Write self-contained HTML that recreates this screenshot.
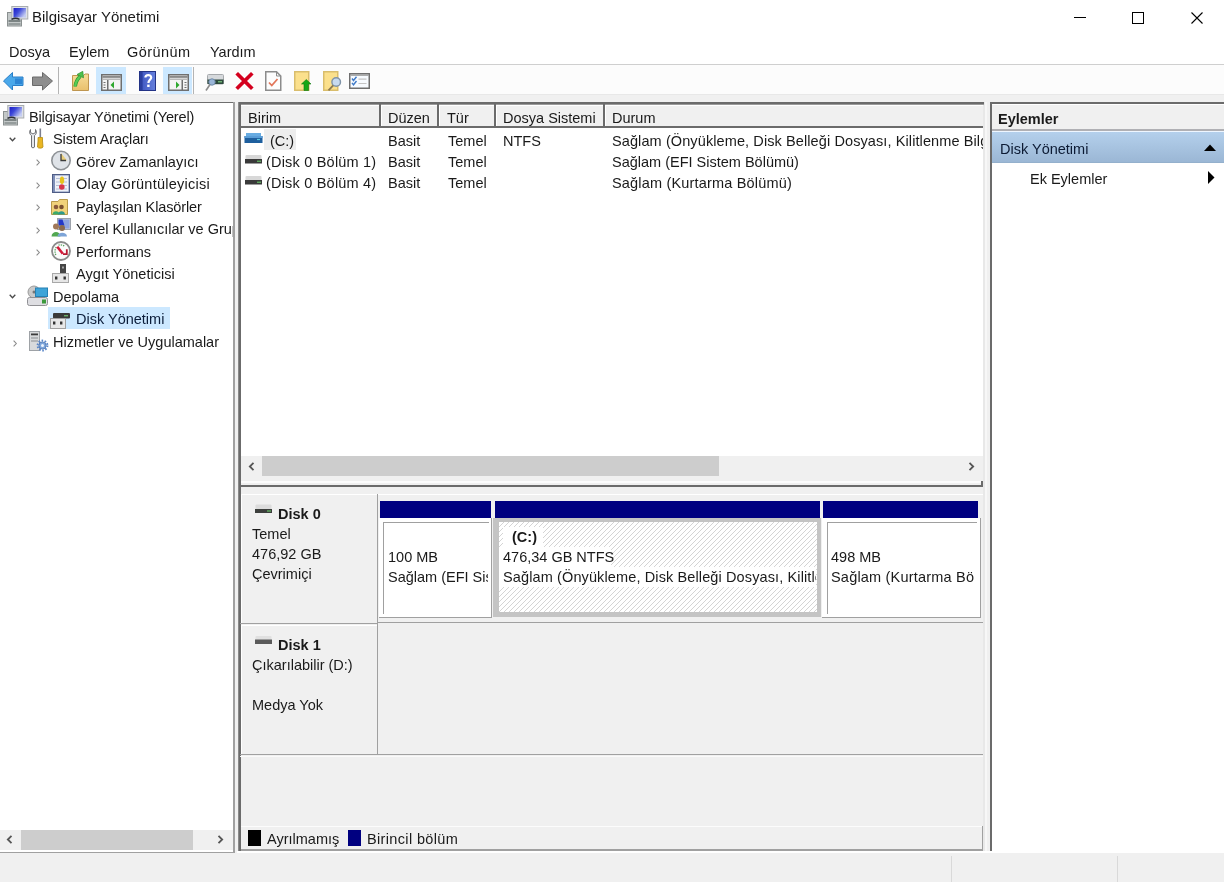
<!DOCTYPE html>
<html><head><meta charset="utf-8">
<style>
*{margin:0;padding:0;box-sizing:border-box}
html,body{width:1224px;height:882px;overflow:hidden;background:#f0f0f0}
body{-webkit-font-smoothing:antialiased;position:relative;font-family:"Liberation Sans",sans-serif;font-size:14.5px;color:#1a1a1a;line-height:18px}
.a{position:absolute}
.t{position:absolute;white-space:nowrap;line-height:18px;will-change:transform}
.b{font-weight:bold}
svg{position:absolute;overflow:visible}
</style></head><body>

<!-- title bar -->
<div class="a" style="left:0;top:0;width:1224px;height:65px;background:#fff"></div>
<div class="t" style="left:32px;top:8px;font-size:15px">Bilgisayar Yönetimi</div>
<div class="a" style="left:1074px;top:17px;width:12px;height:1px;background:#000"></div>
<div class="a" style="left:1132px;top:12px;width:12px;height:12px;border:1px solid #000"></div>
<svg style="left:1191px;top:12px" width="12" height="12"><path d="M0.5 0.5L11.5 11.5M11.5 0.5L0.5 11.5" stroke="#000" stroke-width="1.1"/></svg>

<!-- menu -->
<div class="t" style="left:9px;top:43px">Dosya</div>
<div class="t" style="left:69px;top:43px">Eylem</div>
<div class="t" style="left:127px;top:43px;letter-spacing:0.45px">Görünüm</div>
<div class="t" style="left:210px;top:43px">Yardım</div>
<div class="a" style="left:0;top:64px;width:1224px;height:1px;background:#cfcfcf"></div>

<!-- toolbar -->
<div class="a" style="left:0;top:65px;width:1224px;height:29px;background:#fcfcfc"></div>
<div class="a" style="left:0;top:94px;width:1224px;height:1px;background:#e8e8e8"></div>
<div class="a" style="left:58px;top:67px;width:1px;height:27px;background:#b4b4b4"></div>
<div class="a" style="left:96px;top:67px;width:30px;height:27px;background:#cce8ff"></div>
<div class="a" style="left:163px;top:67px;width:29px;height:27px;background:#cce8ff"></div>
<div class="a" style="left:193px;top:67px;width:1px;height:27px;background:#b4b4b4"></div>

<!-- tree panel -->
<div class="a" style="left:0;top:102px;width:233px;height:749px;background:#fff"></div>
<div class="a" style="left:0;top:102px;width:233px;height:1px;background:#6e6e6e"></div>
<div class="a" style="left:233px;top:102px;width:2px;height:751px;background:#a0a0a0"></div>
<div class="a" style="left:0;top:852px;width:235px;height:1px;background:#a0a0a0"></div>
<div class="a" style="left:0;top:851px;width:233px;height:1px;background:#fff"></div>
<div class="a" style="left:48px;top:307px;width:122px;height:22px;background:#cce8ff"></div>
<div class="t" style="left:29px;top:108px;letter-spacing:-0.15px">Bilgisayar Yönetimi (Yerel)</div>
<div class="t" style="left:53px;top:130px;letter-spacing:-0.12px">Sistem Araçları</div>
<div class="t" style="left:76px;top:153px">Görev Zamanlayıcı</div>
<div class="t" style="left:76px;top:175px;letter-spacing:0.25px">Olay Görüntüleyicisi</div>
<div class="t" style="left:76px;top:198px;letter-spacing:-0.12px">Paylaşılan Klasörler</div>
<div class="a" style="left:0;top:0;width:233px;height:882px;overflow:hidden">
<div class="t" style="left:76px;top:220px">Yerel Kullanıcılar ve Gruplar</div>
</div>
<div class="t" style="left:76px;top:243px">Performans</div>
<div class="t" style="left:76px;top:265px">Aygıt Yöneticisi</div>
<div class="t" style="left:53px;top:288px">Depolama</div>
<div class="t" style="left:76px;top:310px;color:#0b1d3a">Disk Yönetimi</div>
<div class="t" style="left:53px;top:333px">Hizmetler ve Uygulamalar</div>
<!-- tree scrollbar -->
<div class="a" style="left:0;top:830px;width:233px;height:20px;background:#f0f0f0"></div>
<div class="a" style="left:21px;top:830px;width:172px;height:20px;background:#cdcdcd"></div>
<svg style="left:6px;top:835px" width="7" height="9"><path d="M5.5 0.8L1.8 4.5L5.5 8.2" fill="none" stroke="#555" stroke-width="1.8"/></svg>
<svg style="left:217px;top:835px" width="7" height="9"><path d="M1.5 0.8L5.2 4.5L1.5 8.2" fill="none" stroke="#555" stroke-width="1.8"/></svg>

<!-- center panel -->
<div class="a" style="left:238px;top:102px;width:745px;height:750px;background:#fff"></div>
<div class="a" style="left:983px;top:102px;width:2px;height:750px;background:#e8e8e8"></div>
<div class="a" style="left:985px;top:102px;width:2px;height:750px;background:#f7f7f7"></div>
<div class="a" style="left:238px;top:102px;width:746px;height:2px;background:#6b6b6b"></div>
<div class="a" style="left:240px;top:104px;width:744px;height:1px;background:#9a9a9a"></div>
<div class="a" style="left:238px;top:102px;width:1px;height:750px;background:#8a8a8a"></div>
<div class="a" style="left:239px;top:102px;width:2px;height:750px;background:#6b6b6b"></div>
<!-- list header -->
<div class="a" style="left:241px;top:105px;width:742px;height:1px;background:#fff"></div>
<div class="a" style="left:241px;top:106px;width:742px;height:20px;background:#f0f0f0"></div>
<div class="a" style="left:241px;top:126px;width:742px;height:2px;background:#6b6b6b"></div>
<div class="a" style="left:379px;top:104px;width:2px;height:22px;background:#6b6b6b"></div>
<div class="a" style="left:381px;top:105px;width:1px;height:21px;background:#fff"></div>
<div class="a" style="left:437px;top:104px;width:2px;height:22px;background:#6b6b6b"></div>
<div class="a" style="left:439px;top:105px;width:1px;height:21px;background:#fff"></div>
<div class="a" style="left:494px;top:104px;width:2px;height:22px;background:#6b6b6b"></div>
<div class="a" style="left:496px;top:105px;width:1px;height:21px;background:#fff"></div>
<div class="a" style="left:603px;top:104px;width:2px;height:22px;background:#6b6b6b"></div>
<div class="a" style="left:605px;top:105px;width:1px;height:21px;background:#fff"></div>
<div class="t" style="left:248px;top:109px">Birim</div>
<div class="t" style="left:388px;top:109px">Düzen</div>
<div class="t" style="left:447px;top:109px">Tür</div>
<div class="t" style="left:503px;top:109px">Dosya Sistemi</div>
<div class="t" style="left:612px;top:109px">Durum</div>
<!-- list rows -->
<div class="a" style="left:264px;top:129px;width:32px;height:21px;background:#ededed"></div>
<div class="t" style="left:270px;top:132px">(C:)</div>
<div class="t" style="left:266px;top:153px;letter-spacing:0.2px">(Disk 0 Bölüm 1)</div>
<div class="t" style="left:266px;top:174px;letter-spacing:0.2px">(Disk 0 Bölüm 4)</div>
<div class="t" style="left:388px;top:132px">Basit</div>
<div class="t" style="left:388px;top:153px">Basit</div>
<div class="t" style="left:388px;top:174px">Basit</div>
<div class="t" style="left:448px;top:132px">Temel</div>
<div class="t" style="left:448px;top:153px">Temel</div>
<div class="t" style="left:448px;top:174px">Temel</div>
<div class="t" style="left:503px;top:132px">NTFS</div>
<div class="a" style="left:600px;top:128px;width:383px;height:70px;overflow:hidden">
<div class="t" style="left:12px;top:4px;letter-spacing:0.1px">Sağlam (Önyükleme, Disk Belleği Dosyası, Kilitlenme Bilgi Dökümü, Birincil Bölüm)</div>
<div class="t" style="left:12px;top:25px">Sağlam (EFI Sistem Bölümü)</div>
<div class="t" style="left:12px;top:46px;letter-spacing:0.18px">Sağlam (Kurtarma Bölümü)</div>
</div>
<!-- list h scrollbar -->
<div class="a" style="left:241px;top:456px;width:742px;height:24px;background:#f0f0f0"></div>
<div class="a" style="left:262px;top:456px;width:457px;height:20px;background:#cdcdcd"></div>
<svg style="left:248px;top:462px" width="7" height="9"><path d="M5.5 0.8L1.8 4.5L5.5 8.2" fill="none" stroke="#555" stroke-width="1.8"/></svg>
<svg style="left:968px;top:462px" width="7" height="9"><path d="M1.5 0.8L5.2 4.5L1.5 8.2" fill="none" stroke="#555" stroke-width="1.8"/></svg>
<!-- splitter -->
<div class="a" style="left:241px;top:480px;width:742px;height:7px;background:#f0f0f0"></div>
<div class="a" style="left:241px;top:481px;width:741px;height:2px;background:#fcfcfc"></div>
<div class="a" style="left:239px;top:485px;width:744px;height:2px;background:#6b6b6b"></div>
<div class="a" style="left:981px;top:481px;width:2px;height:5px;background:#6b6b6b"></div>
<!-- graphical -->
<div class="a" style="left:241px;top:487px;width:742px;height:364px;background:#f0f0f0"></div>

<!-- GRAPHICAL VIEW -->
<!-- disk0 label -->
<div class="a" style="left:241px;top:494px;width:136px;height:129px;border-top:1px solid #fff;border-left:1px solid #fff"></div>
<div class="a" style="left:377px;top:494px;width:1px;height:130px;background:#a0a0a0"></div>
<div class="a" style="left:240px;top:623px;width:138px;height:1px;background:#a0a0a0"></div>
<svg style="left:255px;top:504px" width="17" height="10" viewBox="0 0 17 10">
 <rect x="0.5" y="0.5" width="16" height="5" rx="1" fill="#dcdcdc"/>
 <rect x="0" y="5" width="17" height="4" fill="#3c3f3c"/>
 <path d="M12 7h4" stroke="#6fd86f" stroke-width="1"/>
</svg>
<div class="t b" style="left:278px;top:505px">Disk 0</div>
<div class="t" style="left:252px;top:525px">Temel</div>
<div class="t" style="left:252px;top:545px">476,92 GB</div>
<div class="t" style="left:252px;top:565px">Çevrimiçi</div>
<!-- partitions area -->
<div class="a" style="left:378px;top:494px;width:605px;height:1px;background:#fff"></div>
<div class="a" style="left:378px;top:622px;width:605px;height:1px;background:#a0a0a0"></div>
<!-- part1 -->
<div class="a" style="left:380px;top:501px;width:111px;height:17px;background:#000080"></div>
<div class="a" style="left:379px;top:518px;width:113px;height:100px;background:#fff;border-right:1px solid #a0a0a0;border-bottom:1px solid #a0a0a0"></div>
<div class="a" style="left:383px;top:522px;width:106px;height:92px;background:#fff;border-left:1px solid #a0a0a0;border-top:1px solid #a0a0a0"></div>
<div class="a" style="left:384px;top:540px;width:104px;height:50px;overflow:hidden">
<div class="t" style="left:4px;top:8px">100 MB</div>
<div class="t" style="left:4px;top:28px">Sağlam (EFI Sistem Bölümü)</div>
</div>
<!-- part2 C: -->
<div class="a" style="left:495px;top:501px;width:325px;height:17px;background:#000080"></div>
<div class="a" style="left:493px;top:518px;width:328px;height:99px;background:#c4c4c4"></div>
<svg style="left:499px;top:522px" width="318" height="90"><defs><pattern id="hatch" patternUnits="userSpaceOnUse" width="5" height="5"><rect width="5" height="5" fill="#fff"/><path d="M0 5L5 0M-1 1L1 -1M4 6L6 4" stroke="#cfcfcf" stroke-width="0.9"/></pattern></defs><rect width="318" height="90" fill="url(#hatch)"/></svg>
<div class="a" style="left:499px;top:527px;width:317px;height:62px;overflow:hidden">
<div class="a" style="left:4px;top:0px;width:40px;height:20px;background:#fff"></div>
<div class="a" style="left:0px;top:20px;width:112px;height:20px;background:#fff"></div>
<div class="a" style="left:0px;top:40px;width:317px;height:20px;background:#fff"></div>
<div class="t b" style="left:13px;top:1px">(C:)</div>
<div class="t" style="left:4px;top:21px">476,34 GB NTFS</div>
<div class="t" style="left:4px;top:41px;letter-spacing:0.12px">Sağlam (Önyükleme, Disk Belleği Dosyası, Kilitlenme</div>
</div>
<!-- part3 -->
<div class="a" style="left:823px;top:501px;width:155px;height:17px;background:#000080"></div>
<div class="a" style="left:822px;top:518px;width:159px;height:100px;background:#fff;border-right:1px solid #a0a0a0;border-bottom:1px solid #a0a0a0"></div>
<div class="a" style="left:827px;top:522px;width:150px;height:92px;background:#fff;border-left:1px solid #a0a0a0;border-top:1px solid #a0a0a0"></div>
<div class="a" style="left:828px;top:540px;width:146px;height:50px;overflow:hidden">
<div class="t" style="left:3px;top:8px">498 MB</div>
<div class="t" style="left:3px;top:28px;letter-spacing:0.2px">Sağlam (Kurtarma Bölümü)</div>
</div>
<!-- disk1 -->
<div class="a" style="left:241px;top:625px;width:136px;height:129px;border-top:1px solid #fff;border-left:1px solid #fff"></div>
<div class="a" style="left:377px;top:624px;width:1px;height:131px;background:#a0a0a0"></div>
<div class="a" style="left:240px;top:754px;width:743px;height:1px;background:#a0a0a0"></div>
<div class="a" style="left:240px;top:756px;width:743px;height:1px;background:#fafafa"></div>
<svg style="left:255px;top:636px" width="17" height="9" viewBox="0 0 17 9">
 <rect x="0.5" y="0" width="16" height="4" rx="1" fill="#e0e0e0"/>
 <rect x="0" y="3.5" width="17" height="4.5" fill="#5a5a5a"/>
</svg>
<div class="t b" style="left:278px;top:636px">Disk 1</div>
<div class="t" style="left:252px;top:656px">Çıkarılabilir (D:)</div>
<div class="t" style="left:252px;top:696px">Medya Yok</div>
<!-- legend -->
<div class="a" style="left:241px;top:826px;width:741px;height:1px;background:#fcfcfc"></div>
<div class="a" style="left:982px;top:826px;width:1px;height:25px;background:#a0a0a0"></div>
<div class="a" style="left:241px;top:849px;width:742px;height:2px;background:#a0a0a0"></div>
<div class="a" style="left:248px;top:830px;width:13px;height:16px;background:#000"></div>
<div class="t" style="left:267px;top:830px">Ayrılmamış</div>
<div class="a" style="left:348px;top:830px;width:13px;height:16px;background:#000080"></div>
<div class="t" style="left:367px;top:830px;letter-spacing:0.35px">Birincil bölüm</div>

<!-- actions pane -->
<div class="a" style="left:990px;top:102px;width:234px;height:750px;background:#fff;border-top:2px solid #6b6b6b;border-left:2px solid #6b6b6b"></div>
<div class="a" style="left:992px;top:104px;width:232px;height:27px;background:#f0f0f0;border-top:1px solid #fff"></div>
<div class="a" style="left:992px;top:129px;width:232px;height:2px;background:#b0b0b4"></div>
<div class="a" style="left:992px;top:131px;width:232px;height:1px;background:#eef6ff"></div>
<div class="t b" style="left:998px;top:110px">Eylemler</div>
<div class="a" style="left:992px;top:132px;width:232px;height:31px;background:linear-gradient(#b4d0ec,#9ab6d4)"></div>
<div class="a" style="left:992px;top:162px;width:232px;height:1px;background:#94b0cc"></div>
<div class="t" style="left:1000px;top:140px;color:#0c1a33">Disk Yönetimi</div>
<svg style="left:1204px;top:144px" width="12" height="7"><path d="M0 7L6 0.5L12 7Z" fill="#000"/></svg>
<div class="t" style="left:1030px;top:170px">Ek Eylemler</div>
<svg style="left:1208px;top:171px" width="7" height="13"><path d="M0 0L6.5 6.5L0 13Z" fill="#000"/></svg>

<!-- status bar -->
<div class="a" style="left:237px;top:851px;width:987px;height:2px;background:#fff"></div>
<div class="a" style="left:951px;top:856px;width:1px;height:26px;background:#d9d9d9"></div>
<div class="a" style="left:1117px;top:856px;width:1px;height:26px;background:#d9d9d9"></div>


<!-- ICONS -->
<svg style="left:7px;top:6px" width="21" height="21" viewBox="0 0 21 21">
 <defs><linearGradient id="scr1" x1="0" y1="0" x2="1" y2="0.6"><stop offset="0" stop-color="#1c1cc8"/><stop offset="0.45" stop-color="#3c48d8"/><stop offset="1" stop-color="#c4ccf2"/></linearGradient></defs>
 <rect x="0.5" y="6.5" width="14" height="13.5" fill="#c3c8c8" stroke="#8a9090"/>
 <rect x="1.5" y="14" width="12" height="2" fill="#7c8484"/>
 <rect x="1.5" y="17" width="12" height="2" fill="#959c9c"/>
 <rect x="4.8" y="0.5" width="16" height="12.5" fill="#dfe2e6" stroke="#a8acb0"/>
 <rect x="6.5" y="2" width="12.5" height="9.5" fill="url(#scr1)"/>
 <path d="M4.5 13.3q4 -2.2 8 0" stroke="#2c2f34" stroke-width="1.4" fill="none"/>
</svg>
<!-- toolbar icons -->
<svg style="left:3px;top:72px" width="21" height="19" viewBox="0 0 21 19">
 <path d="M0.5 9L9.5 0.5V5H20V13.5H9.5V18Z" fill="#4aa8ea" stroke="#2a7fc8" stroke-width="1"/>
 <path d="M12 6.5H19V12H12z" fill="#1d6fc4" opacity="0.6"/>
</svg>
<svg style="left:32px;top:72px" width="21" height="19" viewBox="0 0 21 19">
 <path d="M20.5 9L10.5 0.5V5H0.5V13.5H10.5V18Z" fill="#8e8e8e" stroke="#6a6a6a" stroke-width="1"/>
</svg>
<svg style="left:72px;top:71px" width="18" height="20" viewBox="0 0 18 20">
 <defs><linearGradient id="fld" x1="0" y1="0" x2="0" y2="1"><stop offset="0" stop-color="#f6dc98"/><stop offset="1" stop-color="#e9c06c"/></linearGradient></defs>
 <path d="M0.5 4.5H11.5L13 3H16.5V19.5H0.5Z" fill="url(#fld)" stroke="#bf9650"/>
 <path d="M3.2 15.5C3.5 11 5.5 8 8.2 5.2" fill="none" stroke="#2f9a2f" stroke-width="3.6"/>
 <path d="M3.2 15.5C3.5 11 5.5 8 8.2 5.2" fill="none" stroke="#56cc56" stroke-width="2.2"/>
 <path d="M5 3.5L10.8 0.3L11.5 6.8Z" fill="#4cc24c" stroke="#2f8f2f" stroke-width="0.7"/>
</svg>
<svg style="left:101px;top:74px" width="21" height="17" viewBox="0 0 21 17">
 <rect x="0.75" y="0.75" width="19.5" height="15.5" fill="#f4f4f4" stroke="#6f6f6f" stroke-width="1.5"/>
 <rect x="1.5" y="2.2" width="18" height="1.5" fill="#6f6f6f"/>
 <rect x="1.5" y="4.5" width="18" height="1.5" fill="#b8b8b8"/>
 <rect x="6" y="6" width="1.5" height="10" fill="#6f6f6f"/>
 <path d="M2.5 8.5h2M2.5 11h2M2.5 13.5h2" stroke="#6f6f6f" stroke-width="1"/>
 <path d="M9.5 11L13 7.5V14.5Z" fill="#2fa82f"/>
</svg>
<svg style="left:139px;top:71px" width="17" height="20" viewBox="0 0 17 20">
 <defs><linearGradient id="hlp" x1="0" y1="0" x2="1" y2="0"><stop offset="0" stop-color="#3c54c0"/><stop offset="1" stop-color="#6680dc"/></linearGradient></defs>
 <rect x="0.5" y="0.5" width="16" height="19" fill="url(#hlp)" stroke="#233386"/>
 <rect x="1" y="1" width="2.6" height="18" fill="#2a3e9e"/>
 <path d="M6.4 6.4C6.4 3.4 12.2 3.2 12.2 6.4C12.2 8.8 9.4 9 9.4 12" fill="none" stroke="#fff" stroke-width="2.2"/>
 <rect x="8.2" y="13.6" width="2.4" height="2.4" fill="#fff"/>
</svg>
<svg style="left:168px;top:74px" width="21" height="17" viewBox="0 0 21 17">
 <rect x="0.75" y="0.75" width="19.5" height="15.5" fill="#f4f4f4" stroke="#6f6f6f" stroke-width="1.5"/>
 <rect x="1.5" y="2.2" width="18" height="1.5" fill="#6f6f6f"/>
 <rect x="1.5" y="4.5" width="18" height="1.5" fill="#b8b8b8"/>
 <rect x="13.5" y="6" width="1.5" height="10" fill="#6f6f6f"/>
 <path d="M16.5 8.5h2M16.5 11h2M16.5 13.5h2" stroke="#6f6f6f" stroke-width="1"/>
 <path d="M11.5 11L8 7.5V14.5Z" fill="#2fa82f"/>
</svg>
<svg style="left:205px;top:74px" width="20" height="18" viewBox="0 0 20 18">
 <rect x="2.5" y="0.5" width="16" height="9.5" rx="1" fill="#d6d9dc" stroke="#a6a9ac"/>
 <rect x="2.5" y="5.5" width="16" height="4.5" fill="#2d4a3c"/>
 <path d="M13 7.8h4" stroke="#8fe08f" stroke-width="1"/>
 <circle cx="7" cy="8" r="3.2" fill="#9ab6d8" stroke="#6f8aa8"/>
 <path d="M5 10.5L1 16.5" stroke="#8a8a8a" stroke-width="1.6"/>
</svg>
<svg style="left:235px;top:72px" width="19" height="18" viewBox="0 0 19 18">
 <path d="M3 2.5L16 15.5M16 2.5L3 15.5" stroke="#d4001e" stroke-width="3.7" stroke-linecap="square"/>
</svg>
<svg style="left:265px;top:71px" width="17" height="20" viewBox="0 0 17 20">
 <path d="M0.75 0.75H11.5L15.75 5V19.25H0.75Z" fill="#fdfdfd" stroke="#8c8c8c" stroke-width="1.5"/>
 <path d="M11.5 0.75V5H15.75" fill="none" stroke="#8c8c8c" stroke-width="1"/>
 <path d="M4 11.5L6.8 14.5L12.5 8" fill="none" stroke="#e2765a" stroke-width="1.8"/>
</svg>
<svg style="left:294px;top:71px" width="18" height="20" viewBox="0 0 18 20">
 <rect x="0.75" y="0.75" width="14" height="18.5" fill="#fbe08c" stroke="#d9bd6c" stroke-width="1.5"/>
 <path d="M7.5 13L12.3 8.5L17 13H14.5V19.5H10V13Z" fill="#16a716" stroke="#0f7a0f" stroke-width="0.6"/>
</svg>
<svg style="left:323px;top:71px" width="19" height="20" viewBox="0 0 19 20">
 <rect x="0.75" y="0.75" width="14" height="18.5" fill="#fbe08c" stroke="#d9bd6c" stroke-width="1.5"/>
 <circle cx="13.2" cy="11" r="4.3" fill="#c7daf0" stroke="#7f93a8" stroke-width="1.4"/>
 <path d="M10.2 14.3L5.5 19.3" stroke="#8c7a50" stroke-width="1.8"/>
</svg>
<svg style="left:349px;top:73px" width="21" height="16" viewBox="0 0 21 16">
 <rect x="0.75" y="0.75" width="19.5" height="14.5" fill="#f7fbff" stroke="#6f6f6f" stroke-width="1.5"/>
 <rect x="1.5" y="1.5" width="18" height="1.3" fill="#9a9a9a"/>
 <path d="M3 5.5L4.5 7.5L7.5 3.8M3 9.8L4.5 11.8L7.5 8" fill="none" stroke="#3f7ac8" stroke-width="1.4"/>
 <path d="M9.5 6.2h8M9.5 10.5h8" stroke="#c4c4c4" stroke-width="1.2"/>
</svg>
<!-- tree icons -->
<svg style="left:3px;top:105px" width="21" height="21" viewBox="0 0 21 21">
 <defs><linearGradient id="scr2" x1="0" y1="0" x2="1" y2="0.6"><stop offset="0" stop-color="#1c1cc8"/><stop offset="0.45" stop-color="#3c48d8"/><stop offset="1" stop-color="#c4ccf2"/></linearGradient></defs>
 <rect x="0.5" y="6.5" width="14" height="13.5" fill="#c3c8c8" stroke="#8a9090"/>
 <rect x="1.5" y="14" width="12" height="2" fill="#7c8484"/>
 <rect x="1.5" y="17" width="12" height="2" fill="#959c9c"/>
 <rect x="4.8" y="0.5" width="16" height="12.5" fill="#dfe2e6" stroke="#a8acb0"/>
 <rect x="6.5" y="2" width="12.5" height="9.5" fill="url(#scr2)"/>
 <path d="M4.5 13.3q4 -2.2 8 0" stroke="#2c2f34" stroke-width="1.4" fill="none"/>
</svg>
<svg style="left:9px;top:137px" width="7" height="5" viewBox="0 0 7 5"><path d="M0.7 0.7L3.5 3.8L6.3 0.7" fill="none" stroke="#4a4a4a" stroke-width="1.3"/></svg>
<svg style="left:29px;top:128px" width="15" height="21" viewBox="0 0 15 21">
 <path d="M1.5 1.5C0 3.5 0.5 6.5 2.5 7.5V19C2.5 20 5.5 20 5.5 19V7.5C7.5 6.5 8 3.5 6.5 1.5V4.5L4 6L1.5 4.5Z" fill="#e6e8ec" stroke="#6e7074" stroke-width="1"/>
 <rect x="10.5" y="0.5" width="1.6" height="9" fill="#7c8090"/>
 <path d="M9 9.5H13.5V13L14 19C14 20.5 8.5 20.5 8.5 19L9 13Z" fill="#eab622" stroke="#b48a10" stroke-width="0.8"/>
</svg>
<svg style="left:36px;top:159px" width="4" height="7" viewBox="0 0 4 7"><path d="M0.6 0.6L3.3 3.5L0.6 6.4" fill="none" stroke="#8a8a8a" stroke-width="1.1"/></svg>
<svg style="left:36px;top:182px" width="4" height="7" viewBox="0 0 4 7"><path d="M0.6 0.6L3.3 3.5L0.6 6.4" fill="none" stroke="#8a8a8a" stroke-width="1.1"/></svg>
<svg style="left:36px;top:204px" width="4" height="7" viewBox="0 0 4 7"><path d="M0.6 0.6L3.3 3.5L0.6 6.4" fill="none" stroke="#8a8a8a" stroke-width="1.1"/></svg>
<svg style="left:36px;top:227px" width="4" height="7" viewBox="0 0 4 7"><path d="M0.6 0.6L3.3 3.5L0.6 6.4" fill="none" stroke="#8a8a8a" stroke-width="1.1"/></svg>
<svg style="left:36px;top:249px" width="4" height="7" viewBox="0 0 4 7"><path d="M0.6 0.6L3.3 3.5L0.6 6.4" fill="none" stroke="#8a8a8a" stroke-width="1.1"/></svg>
<svg style="left:51px;top:150px" width="20" height="21" viewBox="0 0 20 21">
 <circle cx="10" cy="10.5" r="9.2" fill="#dfe3e8" stroke="#8e9296" stroke-width="1.6"/>
 <path d="M10 3V10.5H16" fill="#e9cf7c"/>
 <path d="M10 4V10.5H15" fill="none" stroke="#3c3c3c" stroke-width="1.3"/>
</svg>
<svg style="left:52px;top:174px" width="18" height="19" viewBox="0 0 18 19">
 <rect x="0.5" y="0.5" width="17" height="18" fill="#7f8fb8" stroke="#4f5d86"/>
 <rect x="3" y="1.5" width="13.5" height="16" fill="#eef1f8"/>
 <path d="M4 4.5h11M4 8h11M4 11.5h11M4 15h11" stroke="#a6b2cc" stroke-width="0.8"/>
 <ellipse cx="10" cy="6.3" rx="2.2" ry="3.8" fill="#e6c21c"/>
 <circle cx="9.8" cy="13" r="2.8" fill="#d8364a"/>
</svg>
<svg style="left:51px;top:198px" width="18" height="18" viewBox="0 0 18 18">
 <path d="M0.5 3.5H7L8.5 1.5H16.5V16.5H0.5Z" fill="#f1d27a" stroke="#b89a4a"/>
 <circle cx="5" cy="9" r="2.3" fill="#8a5a3a"/>
 <circle cx="10.5" cy="9" r="2.3" fill="#7a5030"/>
 <path d="M1.5 16.5C1.5 12 8.5 12 8.5 16.5Z" fill="#3aaa6a"/>
 <path d="M7 16.5C7 12 14 12 14 16.5Z" fill="#2e9a8a"/>
</svg>
<svg style="left:51px;top:218px" width="20" height="19" viewBox="0 0 20 19">
 <rect x="6.5" y="0.5" width="13" height="11" fill="#c6cad2" stroke="#9da2aa"/>
 <rect x="7.5" y="1.5" width="11" height="9" fill="#8ea4e0"/>
 <path d="M7.5 1.5h4l2 6h-6z" fill="#2438c8"/>
 <circle cx="5" cy="8.5" r="3" fill="#a07858"/>
 <circle cx="11" cy="10" r="3" fill="#8a6a50"/>
 <path d="M0.5 18.5C0.5 12.5 9.5 12.5 9.5 18.5Z" fill="#52a852"/>
 <path d="M6.5 18.5C6.5 13.5 16 13.5 16 18.5Z" fill="#7da4d8"/>
</svg>
<svg style="left:51px;top:241px" width="20" height="20" viewBox="0 0 20 20">
 <circle cx="10" cy="10" r="9" fill="#fbfbfb" stroke="#8a8a8a" stroke-width="1.8"/>
 <path d="M4.8 14C3.5 11 3.8 7.5 6 5.2M7.5 4.2C9 3.6 11.5 3.8 13.2 5" fill="none" stroke="#5aa060" stroke-width="1.3" stroke-dasharray="1.3 1"/>
 <path d="M6.3 5.8L11.8 12.8" stroke="#d41a3a" stroke-width="2.6"/>
 <path d="M15.8 8.2V13.2H12" fill="none" stroke="#b81830" stroke-width="1.8"/>
</svg>
<svg style="left:52px;top:264px" width="17" height="19" viewBox="0 0 17 19">
 <rect x="8" y="0" width="6" height="9.5" fill="#454545"/>
 <rect x="10.2" y="2.5" width="1.6" height="2" fill="#bbb"/>
 <rect x="0.5" y="9.5" width="16" height="9" fill="#e6e6e6" stroke="#a8a8a8"/>
 <rect x="3" y="12.5" width="2.4" height="3" fill="#333"/>
 <rect x="11.5" y="12.5" width="2.4" height="3" fill="#333"/>
</svg>
<svg style="left:9px;top:294px" width="7" height="5" viewBox="0 0 7 5"><path d="M0.7 0.7L3.5 3.8L6.3 0.7" fill="none" stroke="#4a4a4a" stroke-width="1.3"/></svg>
<svg style="left:27px;top:285px" width="21" height="21" viewBox="0 0 21 21">
 <circle cx="7" cy="7" r="6" fill="#c9c9c9" stroke="#9a9a9a"/>
 <circle cx="7" cy="7" r="1.5" fill="#777"/>
 <rect x="8.5" y="3" width="12" height="8.5" fill="#3ea4d8" stroke="#2480b4"/>
 <rect x="0.5" y="12.5" width="20" height="8" rx="2" fill="#dedee2" stroke="#909094"/>
 <rect x="15" y="14.5" width="4" height="4" fill="#3c9a3c"/>
</svg>
<svg style="left:50px;top:312px" width="21" height="17" viewBox="0 0 21 17">
 <rect x="3" y="1" width="17" height="5.5" rx="1" fill="#3a3a3a"/>
 <path d="M14 3.8h4" stroke="#7fe07f" stroke-width="1"/>
 <rect x="0.5" y="6.5" width="15" height="10" fill="#e8e8e8" stroke="#a0a0a0"/>
 <rect x="3" y="9.5" width="2.4" height="3" fill="#333"/>
 <rect x="10" y="9.5" width="2.4" height="3" fill="#333"/>
</svg>
<svg style="left:13px;top:340px" width="4" height="7" viewBox="0 0 4 7"><path d="M0.6 0.6L3.3 3.5L0.6 6.4" fill="none" stroke="#8a8a8a" stroke-width="1.1"/></svg>
<svg style="left:29px;top:331px" width="19" height="20" viewBox="0 0 19 20">
 <rect x="0.5" y="0.5" width="10" height="19" fill="#d8dadc" stroke="#9ea2a6"/>
 <rect x="2" y="2.5" width="7" height="1.8" fill="#3c3c3c"/>
 <path d="M2 7h7M2 10h7" stroke="#8a8e92" stroke-width="1"/>
 <circle cx="13.5" cy="14.5" r="4.9" fill="none" stroke="#5a86c8" stroke-width="2" stroke-dasharray="1.6 1.48"/>
 <circle cx="13.5" cy="14.5" r="3.6" fill="#7ea6dc" stroke="#4a74b0" stroke-width="0.8"/>
 <circle cx="13.5" cy="14.5" r="1.5" fill="#eef4fc"/>
</svg>
<!-- list icons -->
<svg style="left:244px;top:132px" width="19" height="12" viewBox="0 0 19 12">
 <rect x="2" y="1" width="15" height="4" fill="#68ace2"/>
 <rect x="0.5" y="4" width="18" height="7" fill="#1e5f9e"/>
 <rect x="0.5" y="4" width="18" height="2" fill="#5a9ed8"/>
 <path d="M13 7.5h3" stroke="#5cc8e0" stroke-width="1.2"/>
</svg>
<svg style="left:245px;top:155px" width="17" height="9" viewBox="0 0 17 9">
 <rect x="0.5" y="0" width="16" height="5" rx="1" fill="#d8d8d8"/>
 <rect x="0" y="4" width="17" height="4.5" fill="#3a3a3a"/>
 <path d="M12 6.2h4" stroke="#6fd86f" stroke-width="1"/>
</svg>
<svg style="left:245px;top:176px" width="17" height="9" viewBox="0 0 17 9">
 <rect x="0.5" y="0" width="16" height="5" rx="1" fill="#d8d8d8"/>
 <rect x="0" y="4" width="17" height="4.5" fill="#3a3a3a"/>
 <path d="M12 6.2h4" stroke="#6fd86f" stroke-width="1"/>
</svg>

</body></html>
